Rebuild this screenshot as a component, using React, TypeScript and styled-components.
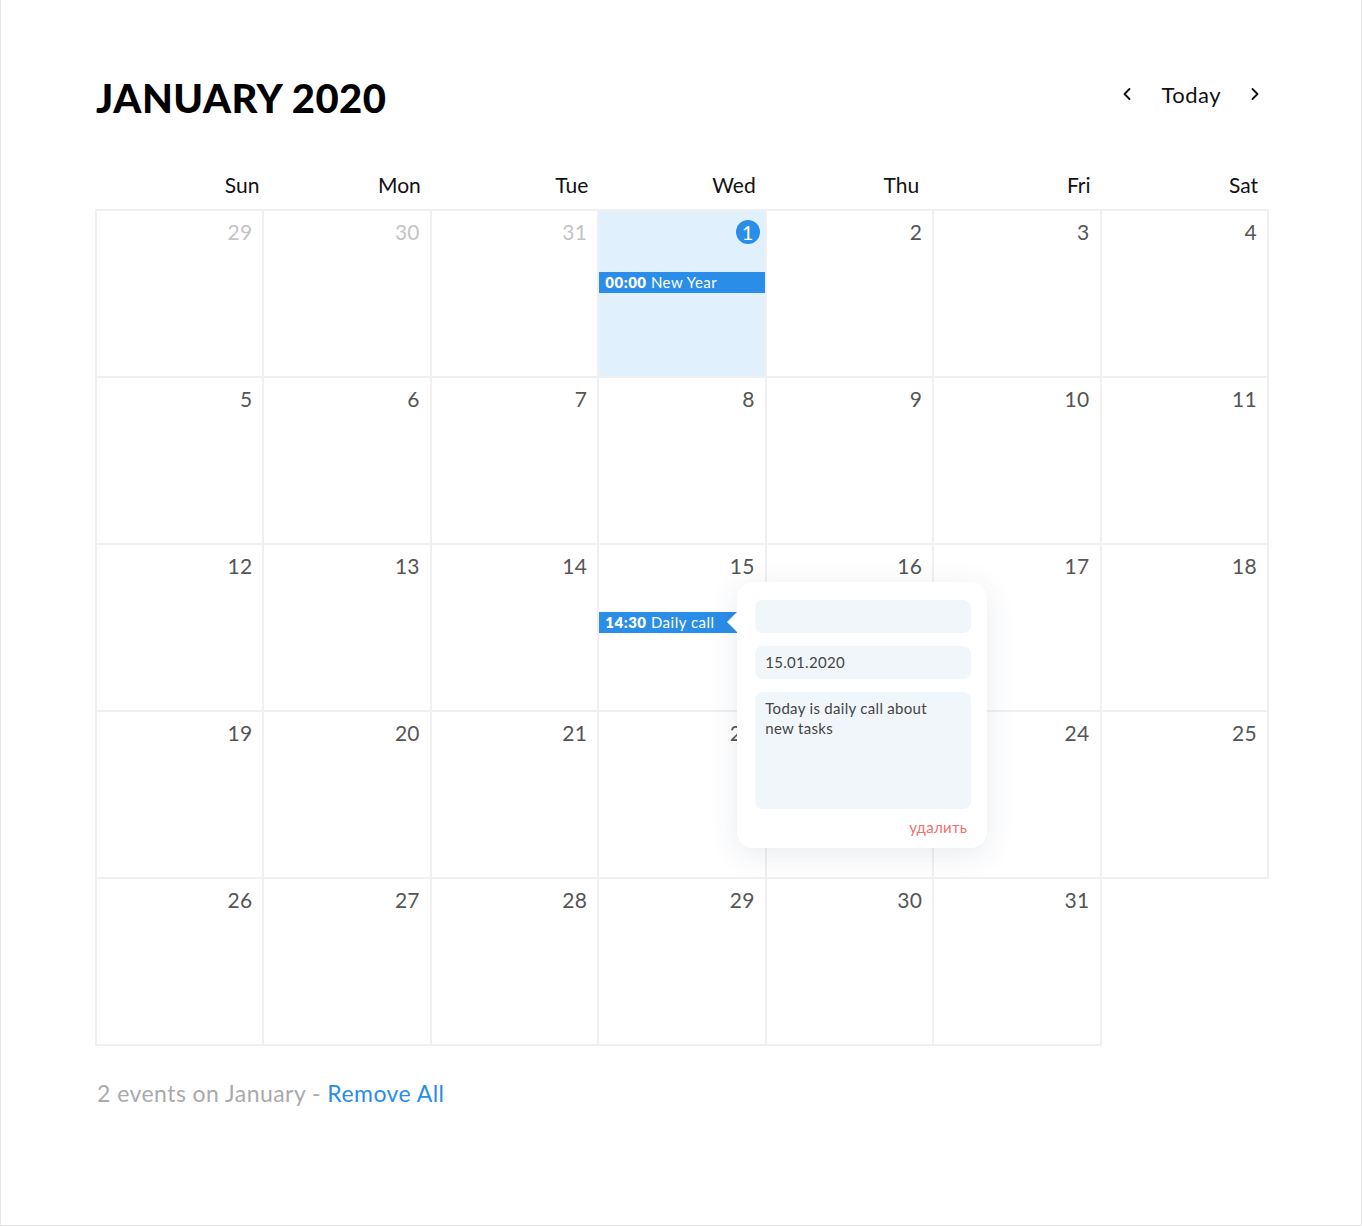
import styled, { createGlobalStyle } from 'styled-components';
import { ChevronLeft, ChevronRight } from 'lucide-react';

const GlobalStyle = createGlobalStyle`
  * { box-sizing: border-box; }
  body {
    margin: 0;
    background: #fff;
    font-family: Lato, "Noto Sans", sans-serif;
  }
`;

const Frame = styled.div`
  width: 1362px;
  height: 1226px;
  border: 1px solid #e6e6e6;
  border-top: none;
  padding: 74px 94px 0 95px;
`;

const Header = styled.div`
  display: flex;
  justify-content: space-between;
  align-items: center;
  height: 48px;
`;

const Title = styled.h1`
  margin: 0;
  font-family: Lato, sans-serif;
  font-weight: 900;
  font-size: 40px;
  line-height: 48px;
  letter-spacing: 0.5px;
  color: #000;
`;

const Nav = styled.div`
  display: flex;
  align-items: center;
  gap: 24px;
  margin-top: -8px;
  margin-right: 2px;
`;

const NavButton = styled.button`
  border: none;
  background: none;
  padding: 0;
  display: flex;
  color: #111;
  cursor: pointer;
`;

const TodayLabel = styled.span`
  font-size: 22px;
  letter-spacing: 0.5px;
  color: #111;
`;

const WeekRow = styled.div`
  display: grid;
  grid-template-columns: repeat(7, 1fr);
  width: 1172px;
  height: 88px;
  align-items: end;
  padding-bottom: 13px;
`;

const WeekDay = styled.div<{ $pad: number }>`
  text-align: right;
  padding-right: ${p => p.$pad}px;
  font-size: 21px;
  line-height: 24px;
  color: #111;
`;

const Grid = styled.div`
  display: grid;
  grid-template-columns: repeat(7, 1fr);
  grid-auto-rows: 167px;
  width: 1172px;
`;

const Cell = styled.div<{ $selected?: boolean; $empty?: boolean }>`
  position: relative;
  border: 1px solid ${p => (p.$empty ? 'transparent' : '#f0f0f0')};
  box-shadow: ${p => (p.$empty ? 'none' : '0 0 0 1px #f0f0f0')};
  background: ${p => (p.$selected ? '#e0f0fd' : 'transparent')};
  padding: 9px 10px 0 0;
`;

const DayNum = styled.div<{ $muted?: boolean }>`
  text-align: right;
  font-size: 21px;
  line-height: 24px;
  letter-spacing: 0.3px;
  color: ${p => (p.$muted ? '#c4c4c4' : '#555')};
`;

const TodayBadge = styled.span`
  display: inline-flex;
  align-items: center;
  justify-content: center;
  width: 24px;
  height: 24px;
  margin-right: -5px;
  border-radius: 50%;
  background: #2a8de8;
  color: #fff;
  font-size: 20px;
`;

const Event = styled.div<{ $top: number }>`
  margin-top: ${p => p.$top}px;
  margin-right: -10px;
  height: 21px;
  padding-left: 6px;
  background: #2a8de8;
  color: #fff;
  font-size: 15px;
  line-height: 21px;
  letter-spacing: 0.5px;
  white-space: nowrap;
  overflow: hidden;
`;

const EventTime = styled.b`
  font-weight: 800;
`;

const Popover = styled.div`
  position: absolute;
  top: 37px;
  left: 138px;
  z-index: 5;
  width: 250px;
  height: 266px;
  padding: 18px 16px 0 18px;
  background: #fff;
  border-radius: 16px;
  box-shadow: 0 6px 30px rgba(30, 60, 100, 0.1);
  display: flex;
  flex-direction: column;
  gap: 13px;

  &::before {
    content: '';
    position: absolute;
    left: -10px;
    top: 30px;
    border-style: solid;
    border-width: 10px 10px 10px 0;
    border-color: transparent #fff transparent transparent;
  }
`;

const Field = styled.div<{ $tall?: boolean }>`
  height: ${p => (p.$tall ? '117px' : '33px')};
  padding: ${p => (p.$tall ? '6px 30px 6px 10px' : '0 10px')};
  border-radius: 8px;
  background: #f1f6fa;
  color: #444;
  font-size: 15px;
  letter-spacing: 0.3px;
  line-height: ${p => (p.$tall ? '20px' : '33px')};
`;

const DeleteLink = styled.div`
  margin-top: -4px;
  text-align: right;
  padding-right: 4px;
  font-size: 15px;
  letter-spacing: 0.3px;
  color: #f27070;
`;

const Footer = styled.div`
  margin-top: 34px;
  margin-left: 1px;
  font-size: 23px;
  letter-spacing: 0.45px;
  color: #aaa;
`;

const RemoveAll = styled.span`
  color: #2a8de8;
  cursor: pointer;
`;

const weekDays = ['Sun', 'Mon', 'Tue', 'Wed', 'Thu', 'Fri', 'Sat'];
const weekPads = [4, 10, 10, 10, 14, 10, 10];

type Day = { n: number; muted?: boolean };

const days: Day[] = [
  { n: 29, muted: true },
  { n: 30, muted: true },
  { n: 31, muted: true },
  ...Array.from({ length: 31 }, (_, i) => ({ n: i + 1 })),
];

export default function App() {
  return (
    <>
      <GlobalStyle />
      <Frame>
        <Header>
          <Title>JANUARY 2020</Title>
          <Nav>
            <NavButton><ChevronLeft size={20} strokeWidth={2.2} /></NavButton>
            <TodayLabel>Today</TodayLabel>
            <NavButton><ChevronRight size={20} strokeWidth={2.2} /></NavButton>
          </Nav>
        </Header>

        <WeekRow>
          {weekDays.map((d, i) => <WeekDay key={d} $pad={weekPads[i]}>{d}</WeekDay>)}
        </WeekRow>

        <Grid>
          {days.map((d, i) => {
            const isToday = !d.muted && d.n === 1;
            const isCall = !d.muted && d.n === 15;
            return (
              <Cell key={i} $selected={isToday}>
                <DayNum $muted={d.muted}>
                  {isToday ? <TodayBadge>1</TodayBadge> : d.n}
                </DayNum>
                {isToday && (
                  <Event $top={28}><EventTime>00:00</EventTime> New Year</Event>
                )}
                {isCall && (
                  <>
                    <Event $top={34}><EventTime>14:30</EventTime> Daily call</Event>
                    <Popover>
                      <Field />
                      <Field>15.01.2020</Field>
                      <Field $tall>Today is daily call about new tasks</Field>
                      <DeleteLink>удалить</DeleteLink>
                    </Popover>
                  </>
                )}
              </Cell>
            );
          })}
          <Cell $empty />
        </Grid>

        <Footer>
          2 events on January - <RemoveAll>Remove All</RemoveAll>
        </Footer>
      </Frame>
    </>
  );
}
